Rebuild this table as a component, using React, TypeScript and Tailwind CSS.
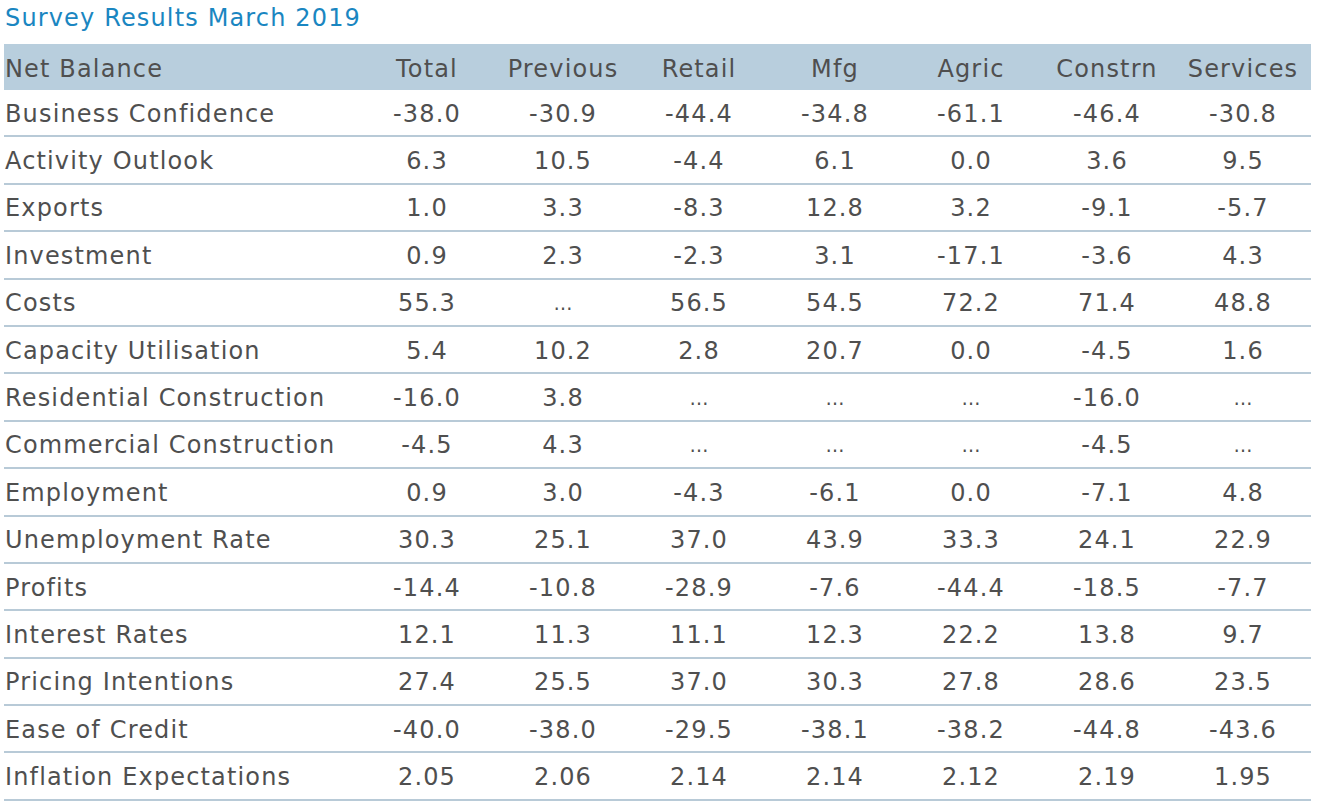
import React from "react";

const rows: [string, string[]][] = [
  ["Business Confidence", ["-38.0", "-30.9", "-44.4", "-34.8", "-61.1", "-46.4", "-30.8"]],
  ["Activity Outlook", ["6.3", "10.5", "-4.4", "6.1", "0.0", "3.6", "9.5"]],
  ["Exports", ["1.0", "3.3", "-8.3", "12.8", "3.2", "-9.1", "-5.7"]],
  ["Investment", ["0.9", "2.3", "-2.3", "3.1", "-17.1", "-3.6", "4.3"]],
  ["Costs", ["55.3", "…", "56.5", "54.5", "72.2", "71.4", "48.8"]],
  ["Capacity Utilisation", ["5.4", "10.2", "2.8", "20.7", "0.0", "-4.5", "1.6"]],
  ["Residential Construction", ["-16.0", "3.8", "…", "…", "…", "-16.0", "…"]],
  ["Commercial Construction", ["-4.5", "4.3", "…", "…", "…", "-4.5", "…"]],
  ["Employment", ["0.9", "3.0", "-4.3", "-6.1", "0.0", "-7.1", "4.8"]],
  ["Unemployment Rate", ["30.3", "25.1", "37.0", "43.9", "33.3", "24.1", "22.9"]],
  ["Profits", ["-14.4", "-10.8", "-28.9", "-7.6", "-44.4", "-18.5", "-7.7"]],
  ["Interest Rates", ["12.1", "11.3", "11.1", "12.3", "22.2", "13.8", "9.7"]],
  ["Pricing Intentions", ["27.4", "25.5", "37.0", "30.3", "27.8", "28.6", "23.5"]],
  ["Ease of Credit", ["-40.0", "-38.0", "-29.5", "-38.1", "-38.2", "-44.8", "-43.6"]],
  ["Inflation Expectations", ["2.05", "2.06", "2.14", "2.14", "2.12", "2.19", "1.95"]],
];

const headers = ["Total", "Previous", "Retail", "Mfg", "Agric", "Constrn", "Services"];

export default function App() {
  return (
    <div className="w-[1319px] h-[806px] bg-white overflow-hidden text-[#4f4f4f] tracking-[1.15px]" style={{ fontFamily: '"DejaVu Sans", Verdana, sans-serif' }}>
      <div className="pl-[5px] h-[40px] pt-[3px] text-[24px] text-[#1a86c1] leading-[30px]">Survey Results March 2019</div>
      <div className="ml-[4px] mt-[4px] w-[1307px]">
        <div className="grid grid-cols-[355px_repeat(7,136px)] h-[46px] pt-[4px] items-center bg-[#b8cedd] text-[24px]">
          <div className="pl-[1px]">Net Balance</div>
          {headers.map((h) => (
            <div key={h} className="text-center">{h}</div>
          ))}
        </div>
        {rows.map(([label, vals]) => (
          <div key={label} className="grid grid-cols-[355px_repeat(7,136px)] h-[47.4px] pt-[2px] items-center border-b-2 border-[#b8cad7] text-[24px]">
            <div className="pl-[1px]">{label}</div>
            {vals.map((v, i) => (
              <div key={i} className={v === "…" ? "text-center text-[19px] tracking-normal" : "text-center"}>{v}</div>
            ))}
          </div>
        ))}
      </div>
    </div>
  );
}
